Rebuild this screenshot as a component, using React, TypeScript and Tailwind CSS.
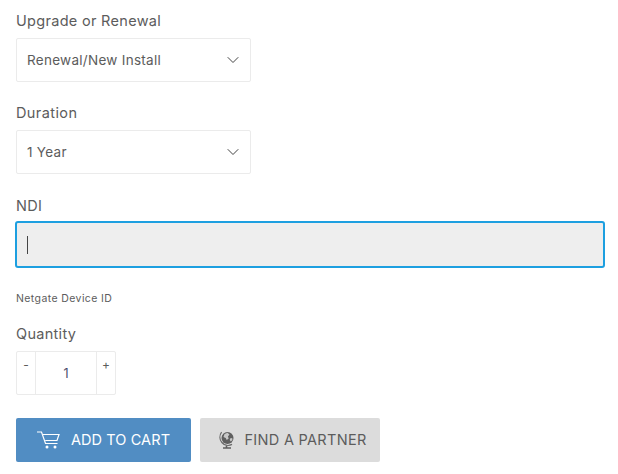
import { ChevronDown } from "lucide-react";

const font = "font-['Inter','Liberation_Sans',sans-serif]";

function Select({ value }: { value: string }) {
  return (
    <div className="flex h-[44px] w-[235px] items-center justify-between rounded-[2px] border border-[#ebebeb] pl-[10px] pr-[7px] text-[13.5px] tracking-[0.28px] text-[#5c5c5c]">
      <span>{value}</span>
      <ChevronDown size={20} strokeWidth={1.2} className="text-[#444]" />
    </div>
  );
}

function CartIcon() {
  return (
    <svg width="23" height="18" viewBox="0 0 23 18" fill="none" stroke="#fff" strokeWidth="1.2">
      <path d="M0 1h4.5l4 11.5h12" />
      <path d="M6 3.5h16l-2 6H8.2" />
      <circle cx="10" cy="16" r="1.5" fill="#fff" stroke="none" />
      <circle cx="18" cy="16" r="1.5" fill="#fff" stroke="none" />
    </svg>
  );
}

function GlobeIcon() {
  return (
    <svg width="17" height="18" viewBox="0 0 17 18">
      <circle cx="9.5" cy="7" r="6" fill="#5f5f5f" />
      <path d="M6.5 3l3-1.2 2 1.6-1.6 2 .8 2-2 1.6-1-2-2.2-1z" fill="#c8c8c8" />
      <path d="M12 7.5l2.2-.6.2 2-1.6 1.6-1-1.4z" fill="#c8c8c8" />
      <path d="M3.6 1.2a8.2 8.2 0 0 0 10.4 12.2" fill="none" stroke="#6a6a6a" strokeWidth="1.2" />
      <path d="M5 17h8M8.5 14.5V17" stroke="#5f5f5f" strokeWidth="1.6" fill="none" />
    </svg>
  );
}

export default function App() {
  return (
    <div className={`${font} h-[474px] w-[618px] overflow-hidden bg-white pl-[16px] text-[#5c5c5c]`}>
      <div className="pt-[12px] text-[14.5px] leading-[18px] tracking-[0.3px]">Upgrade or Renewal</div>
      <div className="mt-[8px]">
        <Select value="Renewal/New Install" />
      </div>

      <div className="mt-[22px] text-[14.5px] leading-[18px] tracking-[0.4px]">Duration</div>
      <div className="mt-[8px]">
        <Select value="1 Year" />
      </div>

      <div className="mt-[23px] text-[14.5px] leading-[18px] tracking-[0.3px]">NDI</div>
      <div className="ml-[-1px] mt-[6px] flex h-[47px] w-[590px] items-center rounded-[3px] border-2 border-[#1d9fe0] bg-[#eeeeee] pl-[10px]">
        <div className="h-[18px] w-px bg-[#444]" />
      </div>

      <div className="mt-[24px] text-[10.5px] leading-[14px] tracking-[0.4px]">Netgate Device ID</div>

      <div className="mt-[19px] text-[14.5px] leading-[18px] tracking-[0.3px]">Quantity</div>
      <div className="mt-[8px] flex h-[44px] w-[100px] rounded-[2px] border border-[#ebebeb] text-[#5c5c5c]">
        <div className="w-[18px] pt-[5px] text-center text-[12px] leading-[16px]">-</div>
        <div className="flex w-[62px] items-center justify-center border-x border-[#ebebeb] pt-[2px] text-[12.5px] text-[#4a4a6a]">
          1
        </div>
        <div className="flex-1 pt-[5px] text-center text-[12px] leading-[16px]">+</div>
      </div>

      <div className="mt-[23px] flex gap-[9px]">
        <div className="flex h-[44px] w-[175px] items-center justify-center gap-[11px] rounded-[2px] bg-[#518dc3] text-[14.5px] tracking-[0.1px] text-white">
          <CartIcon />
          <span>ADD TO CART</span>
        </div>
        <div className="flex h-[44px] w-[180px] items-center justify-center gap-[9px] rounded-[2px] bg-[#dcdcdc] pl-[5px] text-[14.5px] tracking-[0.3px] text-[#5c5c5c]">
          <GlobeIcon />
          <span>FIND A PARTNER</span>
        </div>
      </div>
    </div>
  );
}
